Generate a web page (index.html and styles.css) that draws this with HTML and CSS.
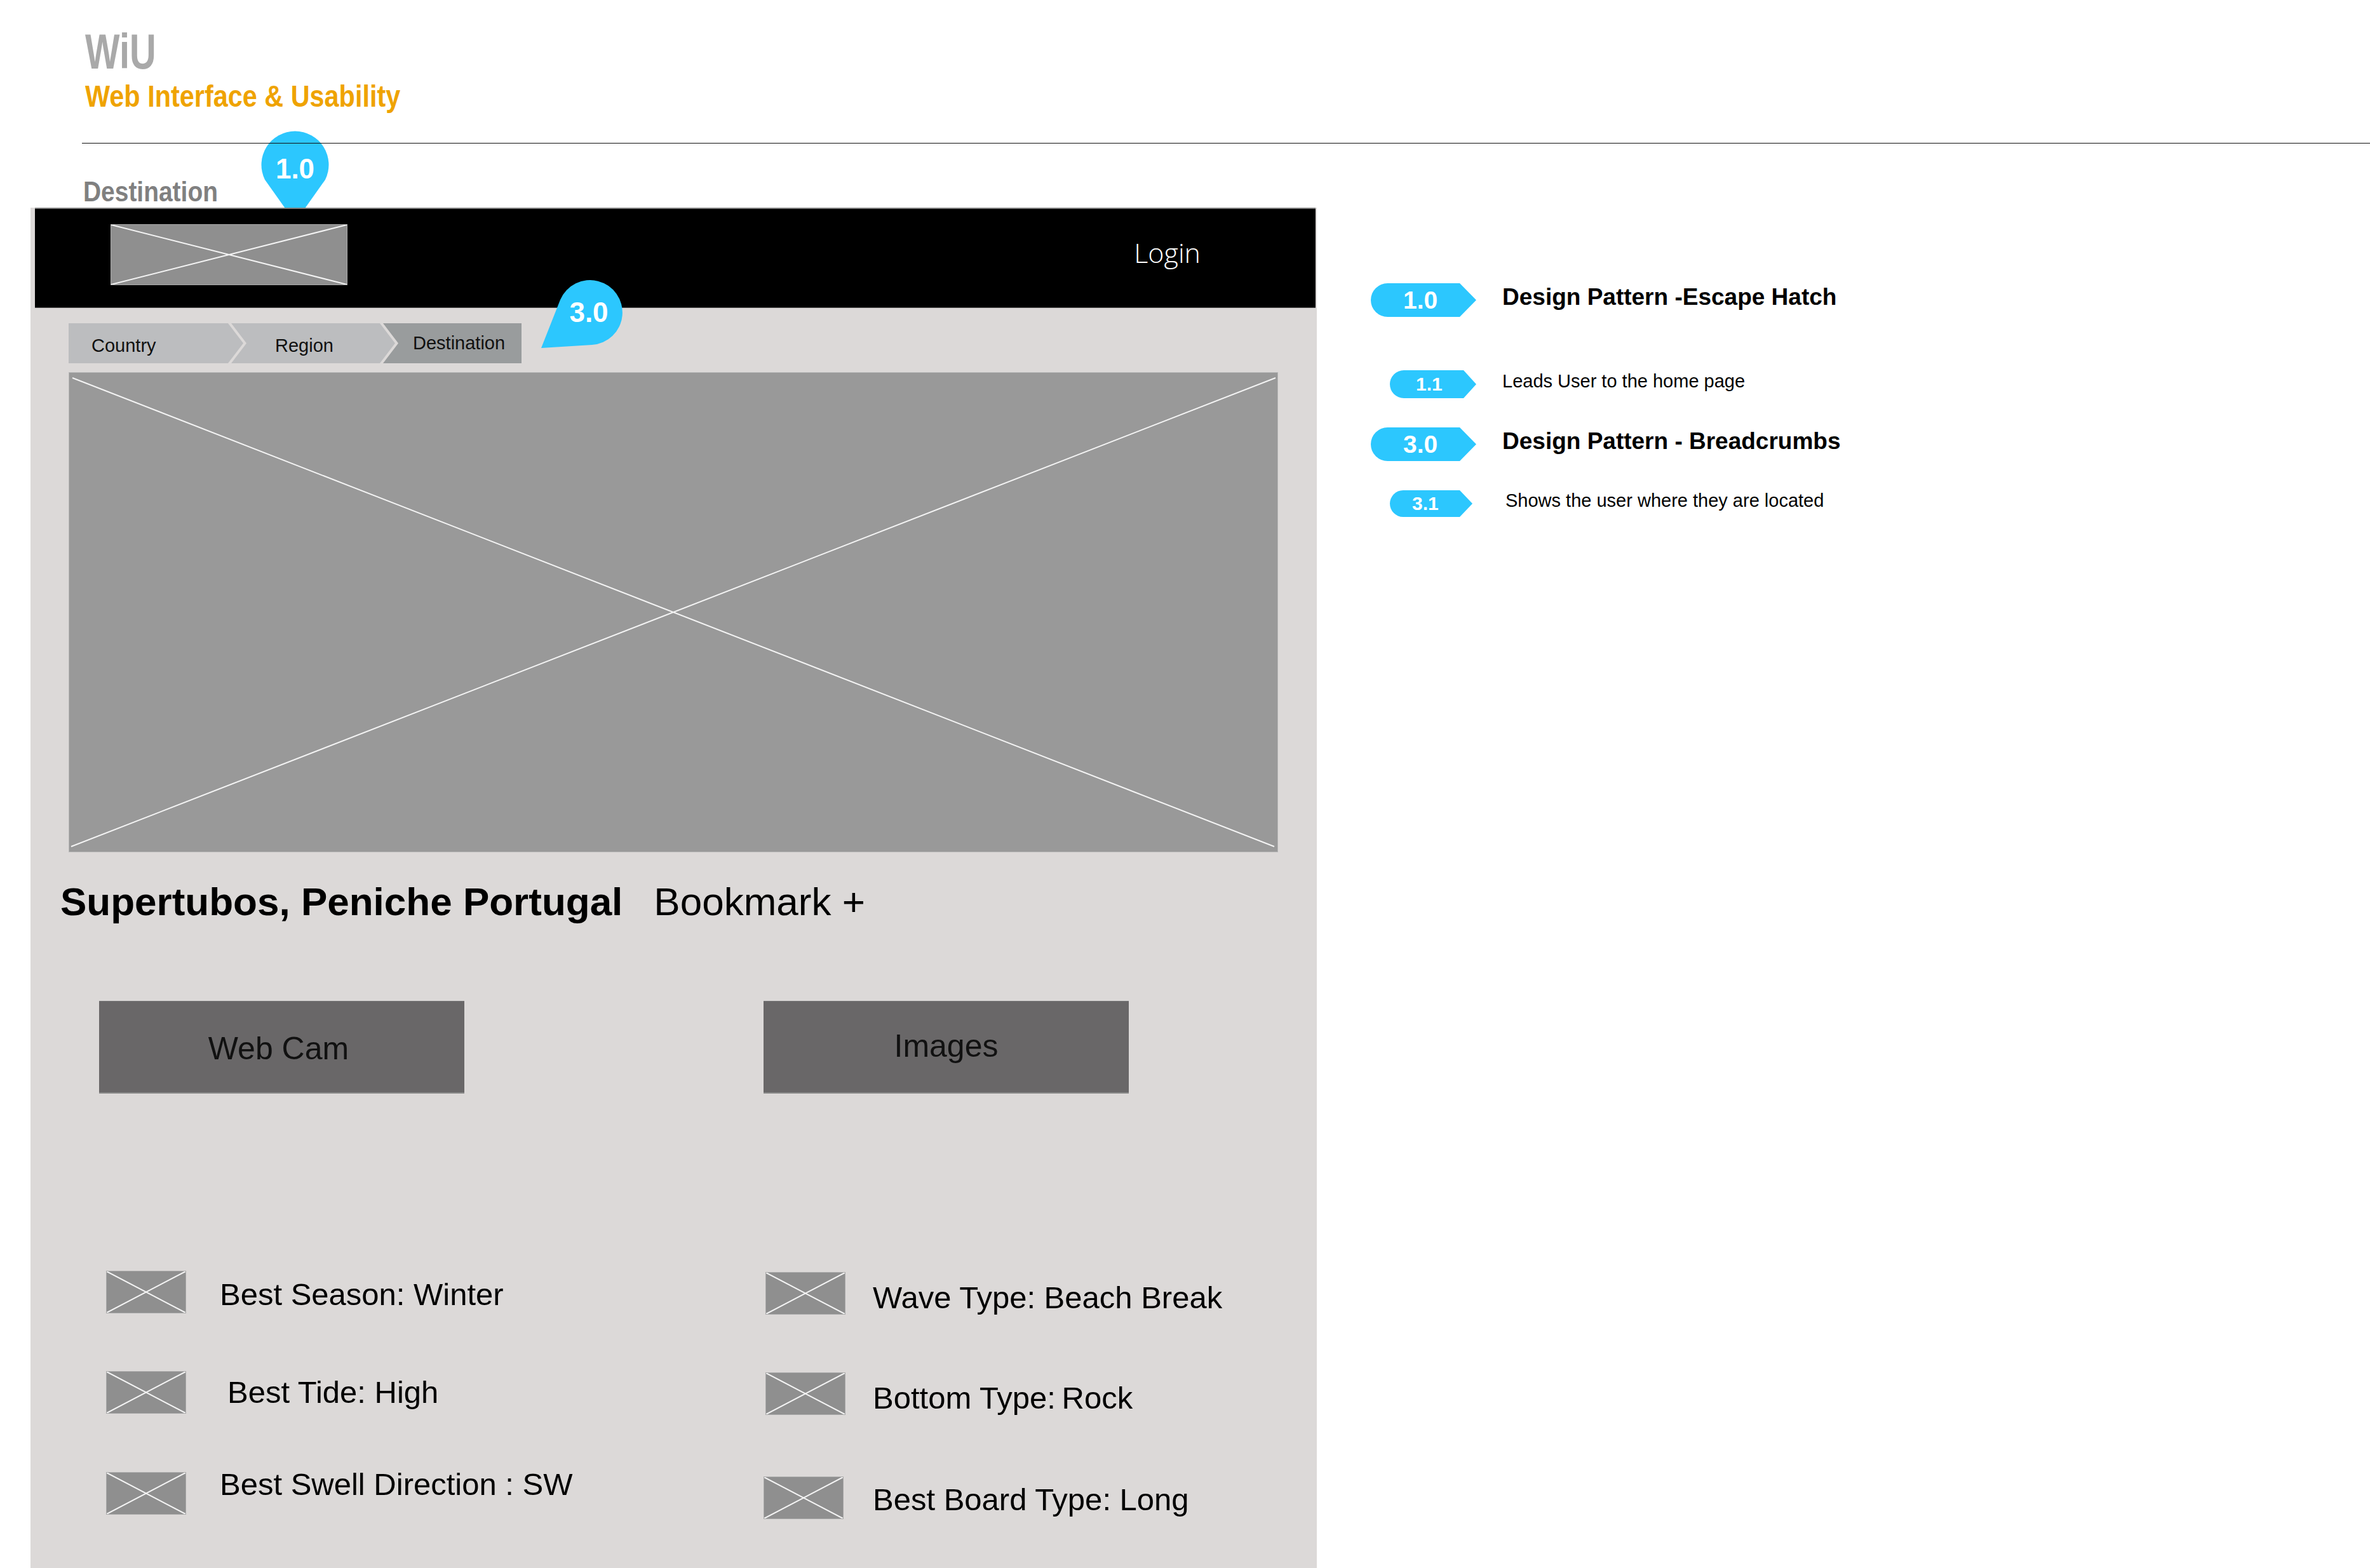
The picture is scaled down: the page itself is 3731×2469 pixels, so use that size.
FILE: index.html
```html
<!DOCTYPE html>
<html lang="en">
<head>
    <meta charset="utf-8" />
    <title>WiU - Destination wireframe</title>
    <link rel="stylesheet" href="styles.css">
</head>
<body>
    <header class="brand">
        <div class="brand-name">WiU</div>
        <div class="brand-tag">Web Interface &amp; Usability</div>
    </header>

    <hr class="rule">

    <div class="page-label">Destination</div>

    <div class="workspace">
        <section class="screen">
            <div class="topbar">
                <div class="ph logo">
                    <svg viewBox="0 0 100 100" preserveAspectRatio="none"><line x1="0" y1="0" x2="100" y2="100" /><line x1="0" y1="100" x2="100" y2="0" /></svg>
                </div>
                <span class="login">Login</span>
            </div>

            <nav class="crumbs">
                <span class="crumb crumb-country">Country</span>
                <span class="crumb crumb-region">Region</span>
                <span class="crumb crumb-current">Destination</span>
            </nav>

            <div class="ph hero">
                <svg viewBox="0 0 1902 754" preserveAspectRatio="none"><line x1="5" y1="8" x2="1897" y2="746" /><line x1="3" y1="746" x2="1899" y2="8" /></svg>
            </div>

            <div class="title-row">
                <h1 class="title">Supertubos, Peniche Portugal</h1>
                <span class="bookmark">Bookmark +</span>
            </div>

            <div class="actions">
                <div class="action">Web Cam</div>
                <div class="action action-images">Images</div>
            </div>

            <div class="specs">
                <div class="spec-col spec-col-left">
                    <div class="spec spec-first">
                        <div class="ph spec-icon"><svg viewBox="0 0 100 100" preserveAspectRatio="none"><line x1="0" y1="0" x2="100" y2="100" /><line x1="0" y1="100" x2="100" y2="0" /></svg></div>
                        <span>Best Season: Winter</span>
                    </div>
                    <div class="spec">
                        <div class="ph spec-icon"><svg viewBox="0 0 100 100" preserveAspectRatio="none"><line x1="0" y1="0" x2="100" y2="100" /><line x1="0" y1="100" x2="100" y2="0" /></svg></div>
                        <span class="spec-indent">Best Tide: High</span>
                    </div>
                    <div class="spec spec-raised">
                        <div class="ph spec-icon"><svg viewBox="0 0 100 100" preserveAspectRatio="none"><line x1="0" y1="0" x2="100" y2="100" /><line x1="0" y1="100" x2="100" y2="0" /></svg></div>
                        <span>Best Swell Direction : SW</span>
                    </div>
                </div>
                <div class="spec-col spec-col-right">
                    <div class="spec">
                        <div class="ph spec-icon"><svg viewBox="0 0 100 100" preserveAspectRatio="none"><line x1="0" y1="0" x2="100" y2="100" /><line x1="0" y1="100" x2="100" y2="0" /></svg></div>
                        <span>Wave Type: Beach Break</span>
                    </div>
                    <div class="spec">
                        <div class="ph spec-icon"><svg viewBox="0 0 100 100" preserveAspectRatio="none"><line x1="0" y1="0" x2="100" y2="100" /><line x1="0" y1="100" x2="100" y2="0" /></svg></div>
                        <span>Bottom Type:&thinsp;Rock</span>
                    </div>
                    <div class="spec spec-last">
                        <div class="ph spec-icon"><svg viewBox="0 0 100 100" preserveAspectRatio="none"><line x1="0" y1="0" x2="100" y2="100" /><line x1="0" y1="100" x2="100" y2="0" /></svg></div>
                        <span>Best Board Type: Long</span>
                    </div>
                </div>
            </div>
        </section>

        <aside class="legend">
            <div class="legend-item">
                <span class="badge">1.0</span>
                <span class="legend-title">Design Pattern -Escape Hatch</span>
            </div>
            <div class="legend-item legend-detail">
                <span class="badge badge-sub">1.1</span>
                <span class="legend-note">Leads User to the home page</span>
            </div>
            <div class="legend-item">
                <span class="badge">3.0</span>
                <span class="legend-title">Design Pattern - Breadcrumbs</span>
            </div>
            <div class="legend-item">
                <span class="badge badge-sub badge-small">3.1</span>
                <span class="legend-note">Shows the user where they are located</span>
            </div>
        </aside>
    </div>

    <!-- annotation pins, drawn over the wireframe -->
    <svg class="pin pin-home" width="107" height="146" viewBox="0 0 107 146">
        <path d="M53.5 146 L6 79 A53 53 0 1 1 101 79 Z" />
        <text x="53.5" y="77">1.0</text>
    </svg>
    <svg class="pin pin-crumbs" width="130" height="109" viewBox="0 0 130 109">
        <path d="M0 108 L30 32 A51 51 0 1 1 80 103 Z" />
        <text x="75" y="67">3.0</text>
    </svg>
</body>
</html>
```

FILE: styles.css
```css
* {
    box-sizing: border-box;
}

body {
    margin: 0;
    width: 3731px;
    height: 2469px;
    overflow: hidden;
    position: relative;
    background-color: #fff;
    font-family: "Liberation Sans", Arial, sans-serif;
    color: #000;
}

/* header */

.brand {
    padding: 43px 0 0 134px;
}

.brand-name {
    font-size: 77px;
    font-weight: bold;
    line-height: 1;
    color: #a9a9a9;
    transform: scaleX(0.75);
    transform-origin: 0 0;
}

.brand-tag {
    margin-top: 7px;
    font-size: 49px;
    font-weight: bold;
    line-height: 1;
    color: #efa300;
    transform: scaleX(0.845);
    transform-origin: 0 0;
}

.rule {
    margin: 49px 0 0 129px;
    height: 0;
    border: 0;
    border-top: 1px solid #111;
    position: relative;
    z-index: 2;
}

.page-label {
    margin: 53px 0 0 131px;
    font-size: 45px;
    font-weight: bold;
    line-height: 1;
    color: #808080;
    transform: scaleX(0.865);
    transform-origin: 0 0;
}

.workspace {
    display: flex;
    align-items: flex-start;
    margin-top: 3px;
}

/* wireframe screen */

.screen {
    margin-left: 48px;
    width: 2025px;
    min-height: 2142px;
    flex: none;
    background-color: #dcd9d8;
}

.ph {
    background-color: #8f8f8f;
    border: 1px solid #a9a9a9;
}

.ph svg {
    display: block;
    width: 100%;
    height: 100%;
}

.ph line {
    stroke: #f4f4f4;
    stroke-width: 2;
    vector-effect: non-scaling-stroke;
}

.topbar {
    margin: 0 2px 0 7px;
    height: 158px;
    padding: 0 184px 11px 119px;
    display: flex;
    align-items: center;
    justify-content: space-between;
    background-color: #000;
    border-top: 2px solid #7d7d7d;
    border-bottom: 1px solid #5a5a5a;
    position: relative;
    z-index: 2;
}

.logo {
    width: 373px;
    height: 96px;
}

.login {
    margin: 0 -3px 8px 0;
    font-family: "Open Sans", "Liberation Sans", sans-serif;
    font-weight: 300;
    font-size: 43px;
    line-height: 1;
    color: #fff;
}

.crumbs {
    display: flex;
    margin: 24px 0 0 60px;
}

.crumb {
    height: 63px;
    display: flex;
    align-items: center;
    padding-top: 8px;
    font-size: 29px;
    line-height: 1;
    color: #111;
    background-color: #bcbdbf;
    clip-path: polygon(0 0, calc(100% - 24px) 0, 100% 50%, calc(100% - 24px) 100%, 0 100%, 24px 50%);
}

.crumb + .crumb {
    margin-left: -19px;
}

.crumb-country {
    width: 275px;
    padding-left: 36px;
    clip-path: polygon(0 0, calc(100% - 24px) 0, 100% 50%, calc(100% - 24px) 100%, 0 100%);
}

.crumb-region {
    width: 258px;
    padding-left: 69px;
}

.crumb-current {
    width: 218px;
    padding: 0 0 0 47px;
    background-color: #999c9d;
    clip-path: polygon(0 0, 100% 0, 100% 100%, 0 100%, 24px 50%);
}

.hero {
    margin: 14px 0 0 60px;
    width: 1904px;
    height: 756px;
    background-color: #999;
    border-color: #b8b8b8;
}

.title-row {
    display: flex;
    align-items: baseline;
    margin: 47px 0 0 47px;
    font-size: 62px;
    line-height: 1;
}

.title {
    margin: 0;
    font-size: 62px;
    font-weight: bold;
}

.bookmark {
    margin-left: 49px;
}

.actions {
    display: flex;
    gap: 471px;
    margin: 125px 0 0 108px;
}

.action {
    width: 575px;
    height: 146px;
    display: flex;
    align-items: center;
    justify-content: center;
    padding: 4px 10px 0 0;
    background-color: #696768;
    border-top: 1px solid #777;
    border-bottom: 2px solid #8a8a8a;
    font-size: 50px;
    line-height: 1;
    color: #111;
}

.action-images {
    padding: 0 0 4px 0;
}

.specs {
    display: flex;
    margin: 279px 0 0 119px;
}

.spec-col {
    display: flex;
    flex-direction: column;
    gap: 91px;
}

.spec-col-left {
    width: 1038px;
}

.spec-col-right {
    padding-top: 2px;
}

.spec {
    display: flex;
    align-items: center;
    gap: 53px;
    font-size: 49px;
    line-height: 1;
}

.spec-col-right .spec {
    gap: 43px;
}

.spec-col-right .spec span {
    margin-top: 14px;
}

.spec-icon {
    width: 126px;
    height: 67px;
    flex: none;
}

.spec-first span {
    margin-top: 8px;
}

.spec-indent {
    margin-left: 12px;
}

.spec-col-left .spec-raised {
    margin-top: -4px;
}

.spec-raised span {
    margin-bottom: 28px;
}

.spec-col-right .spec-last {
    margin-top: 6px;
}

.spec-last .spec-icon {
    margin-left: -3px;
}

.spec-col-right .spec-last span {
    margin-left: 3px;
    margin-top: 6px;
}

/* legend */

.legend {
    margin: 119px 0 0 85px;
    display: flex;
    flex-direction: column;
}

.legend-item {
    display: grid;
    grid-template-columns: 166px auto;
    column-gap: 41px;
    align-items: center;
}

.legend-item + .legend-item {
    margin-top: 46px;
}

.legend-item.legend-detail {
    margin-top: 84px;
}

.badge {
    justify-self: end;
    width: 166px;
    height: 53px;
    display: flex;
    align-items: center;
    padding-left: 51px;
    background-color: #2cc7fe;
    border-radius: 27px 0 0 27px;
    clip-path: polygon(0 0, calc(100% - 26px) 0, 100% 50%, calc(100% - 26px) 100%, 0 100%);
    font-size: 39px;
    font-weight: bold;
    line-height: 1;
    color: #fff;
}

.badge-sub {
    width: 136px;
    height: 44px;
    padding-left: 41px;
    border-radius: 22px 0 0 22px;
    clip-path: polygon(0 0, calc(100% - 20px) 0, 100% 50%, calc(100% - 20px) 100%, 0 100%);
    font-size: 30px;
}

.badge-small {
    width: 130px;
    height: 42px;
    margin-right: 6px;
    padding-left: 35px;
}

.legend-title {
    padding-bottom: 10px;
    font-size: 37px;
    font-weight: bold;
    line-height: 1;
}

.legend-note {
    padding-bottom: 10px;
    font-size: 29px;
    line-height: 1;
}

.legend-item:last-child .legend-note {
    margin-left: 5px;
}

/* pins */

.pin {
    position: absolute;
    z-index: 1;
}

.pin path {
    fill: #2cc7fe;
}

.pin text {
    fill: #fff;
    font-family: "Liberation Sans", Arial, sans-serif;
    font-size: 44px;
    font-weight: bold;
    text-anchor: middle;
}

.pin-home {
    left: 411px;
    top: 204px;
}

.pin-crumbs {
    left: 852px;
    top: 440px;
    z-index: 3;
}
```
